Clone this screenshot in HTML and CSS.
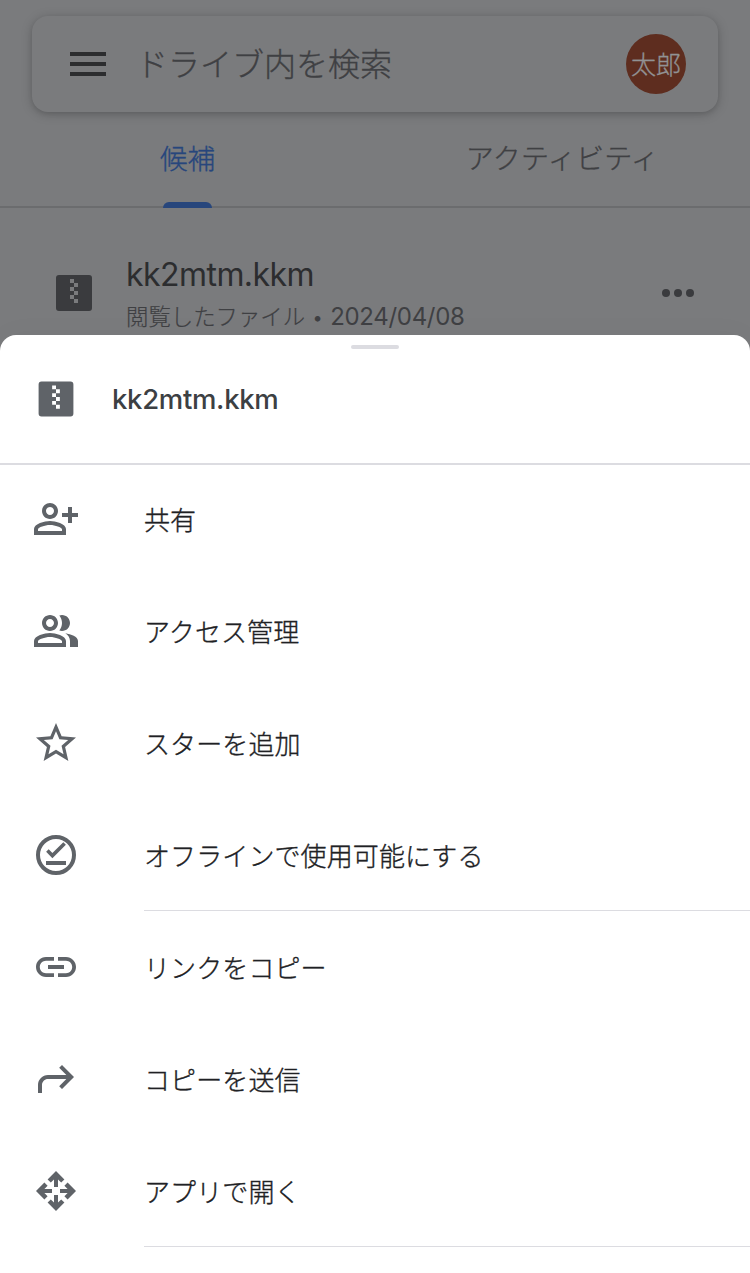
FILE: index.html
```html
<!DOCTYPE html>
<html lang="ja">
<head>
<meta charset="utf-8">
<title>ドライブ</title>
<link rel="stylesheet" href="styles.css">
</head>
<body>
<div class="screen">
  <div class="backdrop">
    <div class="search">
      <div class="burger"><i></i><i></i><i></i></div>
      <span class="search-text">ドライブ内を検索</span>
      <span class="avatar">太郎</span>
    </div>
    <div class="tabs">
      <div class="tab active"><span>候補</span></div>
      <div class="tab wide"><span>アクティビティ</span></div>
    </div>
    <div class="file">
      <svg class="zip" viewBox="0 0 24 24"><path fill-rule="evenodd" d="M4.500 3h15A1.500 1.500 0 0 1 21 4.500v15a1.500 1.500 0 0 1-1.500 1.500h-15A1.500 1.500 0 0 1 3 19.500v-15A1.500 1.500 0 0 1 4.500 3zM10 5v2h2V5zM12 7v2h2V7zM10 9v2h2V9zM12 11v2h2v-2zM10 13v2h2v-2zM12 15v2h2v-2z"/></svg>
      <div class="file-text">
        <div class="file-name">kk2mtm.kkm</div>
        <div class="file-meta"><span class="viewed">閲覧したファイル</span><span class="dot">•</span><span class="date">2024/04/08</span></div>
      </div>
      <div class="more"><i></i><i></i><i></i></div>
    </div>
  </div>
  <div class="sheet">
    <div class="sheet-head">
      <div class="handle"></div>
      <div class="sheet-title">
        <svg class="zip" viewBox="0 0 24 24"><path fill-rule="evenodd" d="M4.500 3h15A1.500 1.500 0 0 1 21 4.500v15a1.500 1.500 0 0 1-1.500 1.500h-15A1.500 1.500 0 0 1 3 19.500v-15A1.500 1.500 0 0 1 4.500 3zM10 5v2h2V5zM12 7v2h2V7zM10 9v2h2V9zM12 11v2h2v-2zM10 13v2h2v-2zM12 15v2h2v-2z"/></svg>
        <span class="sheet-name">kk2mtm.kkm</span>
      </div>
    </div>
    <div class="menu">
      <div class="item">
        <svg viewBox="0 0 24 24"><path d="M9 12c2.210 0 4-1.790 4-4s-1.790-4-4-4-4 1.790-4 4 1.790 4 4 4zm0-6c1.100 0 2 .9 2 2s-.9 2-2 2-2-.9-2-2 .9-2 2-2zm0 7c-2.670 0-8 1.340-8 4v3h16v-3c0-2.660-5.330-4-8-4zm6 5H3v-.99C3.200 16.290 6.300 15 9 15s5.800 1.290 6 2v1zM18 6h2v3h3v2h-3v3h-2v-3h-3V9h3z"/></svg>
        <span>共有</span>
      </div>
      <div class="item">
        <svg viewBox="0 0 24 24"><path d="M9 12c2.210 0 4-1.790 4-4s-1.790-4-4-4-4 1.790-4 4 1.790 4 4 4zm0-6c1.100 0 2 .9 2 2s-.9 2-2 2-2-.9-2-2 .9-2 2-2zm0 7c-2.670 0-8 1.340-8 4v3h16v-3c0-2.660-5.330-4-8-4zm6 5H3v-.99C3.200 16.290 6.300 15 9 15s5.800 1.290 6 2v1zM16.670 13.130C18.040 14.060 19 15.320 19 17v3h4v-3c0-2.180-3.570-3.470-6.330-3.870zM15 12c2.210 0 4-1.790 4-4s-1.790-4-4-4c-.47 0-.91.1-1.330.24C14.500 5.270 15 6.580 15 8s-.5 2.730-1.330 3.760c.42.14.86.24 1.330.24z"/></svg>
        <span>アクセス管理</span>
      </div>
      <div class="item">
        <svg viewBox="0 0 24 24"><path d="M22 9.240l-7.190-.62L12 2 9.190 8.630 2 9.240l5.460 4.730L5.820 21 12 17.270 18.180 21l-1.630-7.030L22 9.240zM12 15.400l-3.760 2.270 1-4.280-3.320-2.880 4.380-.38L12 6.100l1.710 4.040 4.380.38-3.320 2.880 1 4.280L12 15.400z"/></svg>
        <span>スターを追加</span>
      </div>
      <div class="item divided">
        <svg viewBox="0 0 24 24"><g class="line"><circle cx="12" cy="12" r="9"/><path d="M7 16h10"/><path class="tick" d="M7.700 9.800l2.500 2.500L16.300 6.200"/></g></svg>
        <span>オフラインで使用可能にする</span>
      </div>
      <div class="item">
        <svg viewBox="0 0 24 24"><path d="M3.900 12c0-1.710 1.390-3.100 3.100-3.100h4V7H7c-2.760 0-5 2.240-5 5s2.240 5 5 5h4v-1.900H7c-1.710 0-3.100-1.390-3.100-3.100zM8 13h8v-2H8v2zm9-6h-4v1.900h4c1.710 0 3.100 1.390 3.100 3.100s-1.390 3.100-3.100 3.100h-4V17h4c2.760 0 5-2.240 5-5s-2.240-5-5-5z"/></svg>
        <span>リンクをコピー</span>
      </div>
      <div class="item">
        <svg viewBox="0 0 24 24"><path d="M15 5l6 6-6 6-1.410-1.410L17.170 12H8c-1.660 0-3 1.340-3 3v4H3v-4c0-2.760 2.240-5 5-5h9.170l-3.580-3.590z"/></svg>
        <span>コピーを送信</span>
      </div>
      <div class="item divided">
        <svg viewBox="0 0 24 24"><defs><path id="arm" d="M12 2l4.200 4.200-1.600 1.600L13 6.200V10h-2V6.200L9.400 7.800 7.800 6.200z"/></defs><use href="#arm"/><use href="#arm" transform="rotate(90 12 12)"/><use href="#arm" transform="rotate(180 12 12)"/><use href="#arm" transform="rotate(270 12 12)"/></svg>
        <span>アプリで開く</span>
      </div>
    </div>
  </div>
</div>
</body>
</html>
```
FILE: styles.css
```css
* { box-sizing: border-box; }
body {
  margin: 0;
  font-family: "Noto Sans CJK JP", sans-serif;
  font-weight: 300;
  -webkit-text-stroke: .35px currentColor;
}
.screen {
  width: 750px;
  height: 1273px;
  overflow: hidden;
  background: #7a7b7d;
  display: flex;
  flex-direction: column;
}
.backdrop { height: 335px; flex: none; padding-top: 16px; }
.search {
  height: 96px;
  margin: 0 32px;
  padding: 0 32px 0 38px;
  border-radius: 16px;
  display: flex;
  align-items: center;
  box-shadow: 0 2px 12px rgba(0, 0, 0, .2), 0 2px 4px rgba(0, 0, 0, .08);
}
.burger { display: flex; flex-direction: column; gap: 6px; width: 36px; }
.burger i { height: 4px; background: #2c2d2f; }
.search-text {
  flex: 1;
  margin-left: 30px;
  padding-bottom: 5px;
  font-size: 32px;
  line-height: 40px;
  color: #3f4043;
}
.avatar {
  width: 60px;
  height: 60px;
  border-radius: 50%;
  background: #5e2d1f;
  color: #919294;
  font-size: 25px;
  line-height: 58px;
  text-align: center;
}
.tabs {
  height: 96px;
  display: flex;
  border-bottom: 2px solid #6b6c6e;
}
.tab {
  flex: 1;
  height: 96px;
  display: flex;
  flex-direction: column;
  align-items: center;
  font-size: 27.6px;
  line-height: 91px;
  color: #3f4043;
}
.wide { font-size: 28px; letter-spacing: .3px; }
.tab span { height: 90px; }
.active { color: #27467c; }
.active::after {
  content: "";
  width: 49px;
  height: 6px;
  border-radius: 6px 6px 0 0;
  background: #27467c;
}
.file {
  height: 127px;
  padding: 0 56px 0 50px;
  display: flex;
}
.zip { width: 48px; height: 48px; fill: #3a3b3e; flex: none; }
.file .zip { margin-top: 61px; }
.file-text { flex: 1; margin-left: 28px; padding-top: 47px; }
.file-name, .dot, .date, .sheet-name { -webkit-text-stroke: 0; }
.file-name {
  font: 400 32px/40px Inter, sans-serif;
  letter-spacing: -.55px;
  color: #2c2d2f;
}
.file-meta {
  display: flex;
  align-items: center;
  height: 44px;
  font-size: 22.4px;
  color: #3f4043;
}
.viewed { padding-bottom: 4px; -webkit-text-stroke-width: .2px; }
.dot { width: 25px; text-align: center; font: 400 18px Inter, sans-serif; }
.date { font: 400 24px/44px Inter, sans-serif; letter-spacing: -.3px; }
.more { display: flex; gap: 4px; padding-top: 81px; }
.more i { width: 8px; height: 8px; border-radius: 50%; background: #3a3b3e; }
.sheet {
  flex: 1;
  background: #fff;
  border-radius: 16px 16px 0 0;
  box-shadow: 0 0 30px rgba(0, 0, 0, .03);
}
.sheet-head {
  height: 130px;
  padding-top: 10px;
  border-bottom: 2px solid #dcdce1;
}
.handle {
  width: 48px;
  height: 4px;
  margin: 0 auto;
  border-radius: 2px;
  background: #dcdce1;
}
.sheet-title { display: flex; align-items: center; height: 100px; padding-left: 32px; }
.sheet-title .zip { width: 48px; height: 48px; padding: .8px; fill: #5f6368; }
.sheet-name {
  margin-left: 32px;
  font: 500 27.5px/40px Inter, sans-serif;
  letter-spacing: -.3px;
  color: #3c4043;
}
.menu { margin-top: -2px; }
.item {
  height: 112px;
  display: flex;
  align-items: center;
  padding-left: 32px;
}
.item svg { width: 48px; height: 48px; margin-right: 64px; fill: #5f6368; flex: none; }
.item span {
  flex: 1;
  height: 112px;
  font-size: 26px;
  letter-spacing: .1px;
  line-height: 112px;
  color: #202124;
}
.divided span { border-bottom: 1px solid #dcdce1; }
.item .line { fill: none; stroke: #5f6368; stroke-width: 2; }
.item .tick { stroke-width: 1.8; }
```
